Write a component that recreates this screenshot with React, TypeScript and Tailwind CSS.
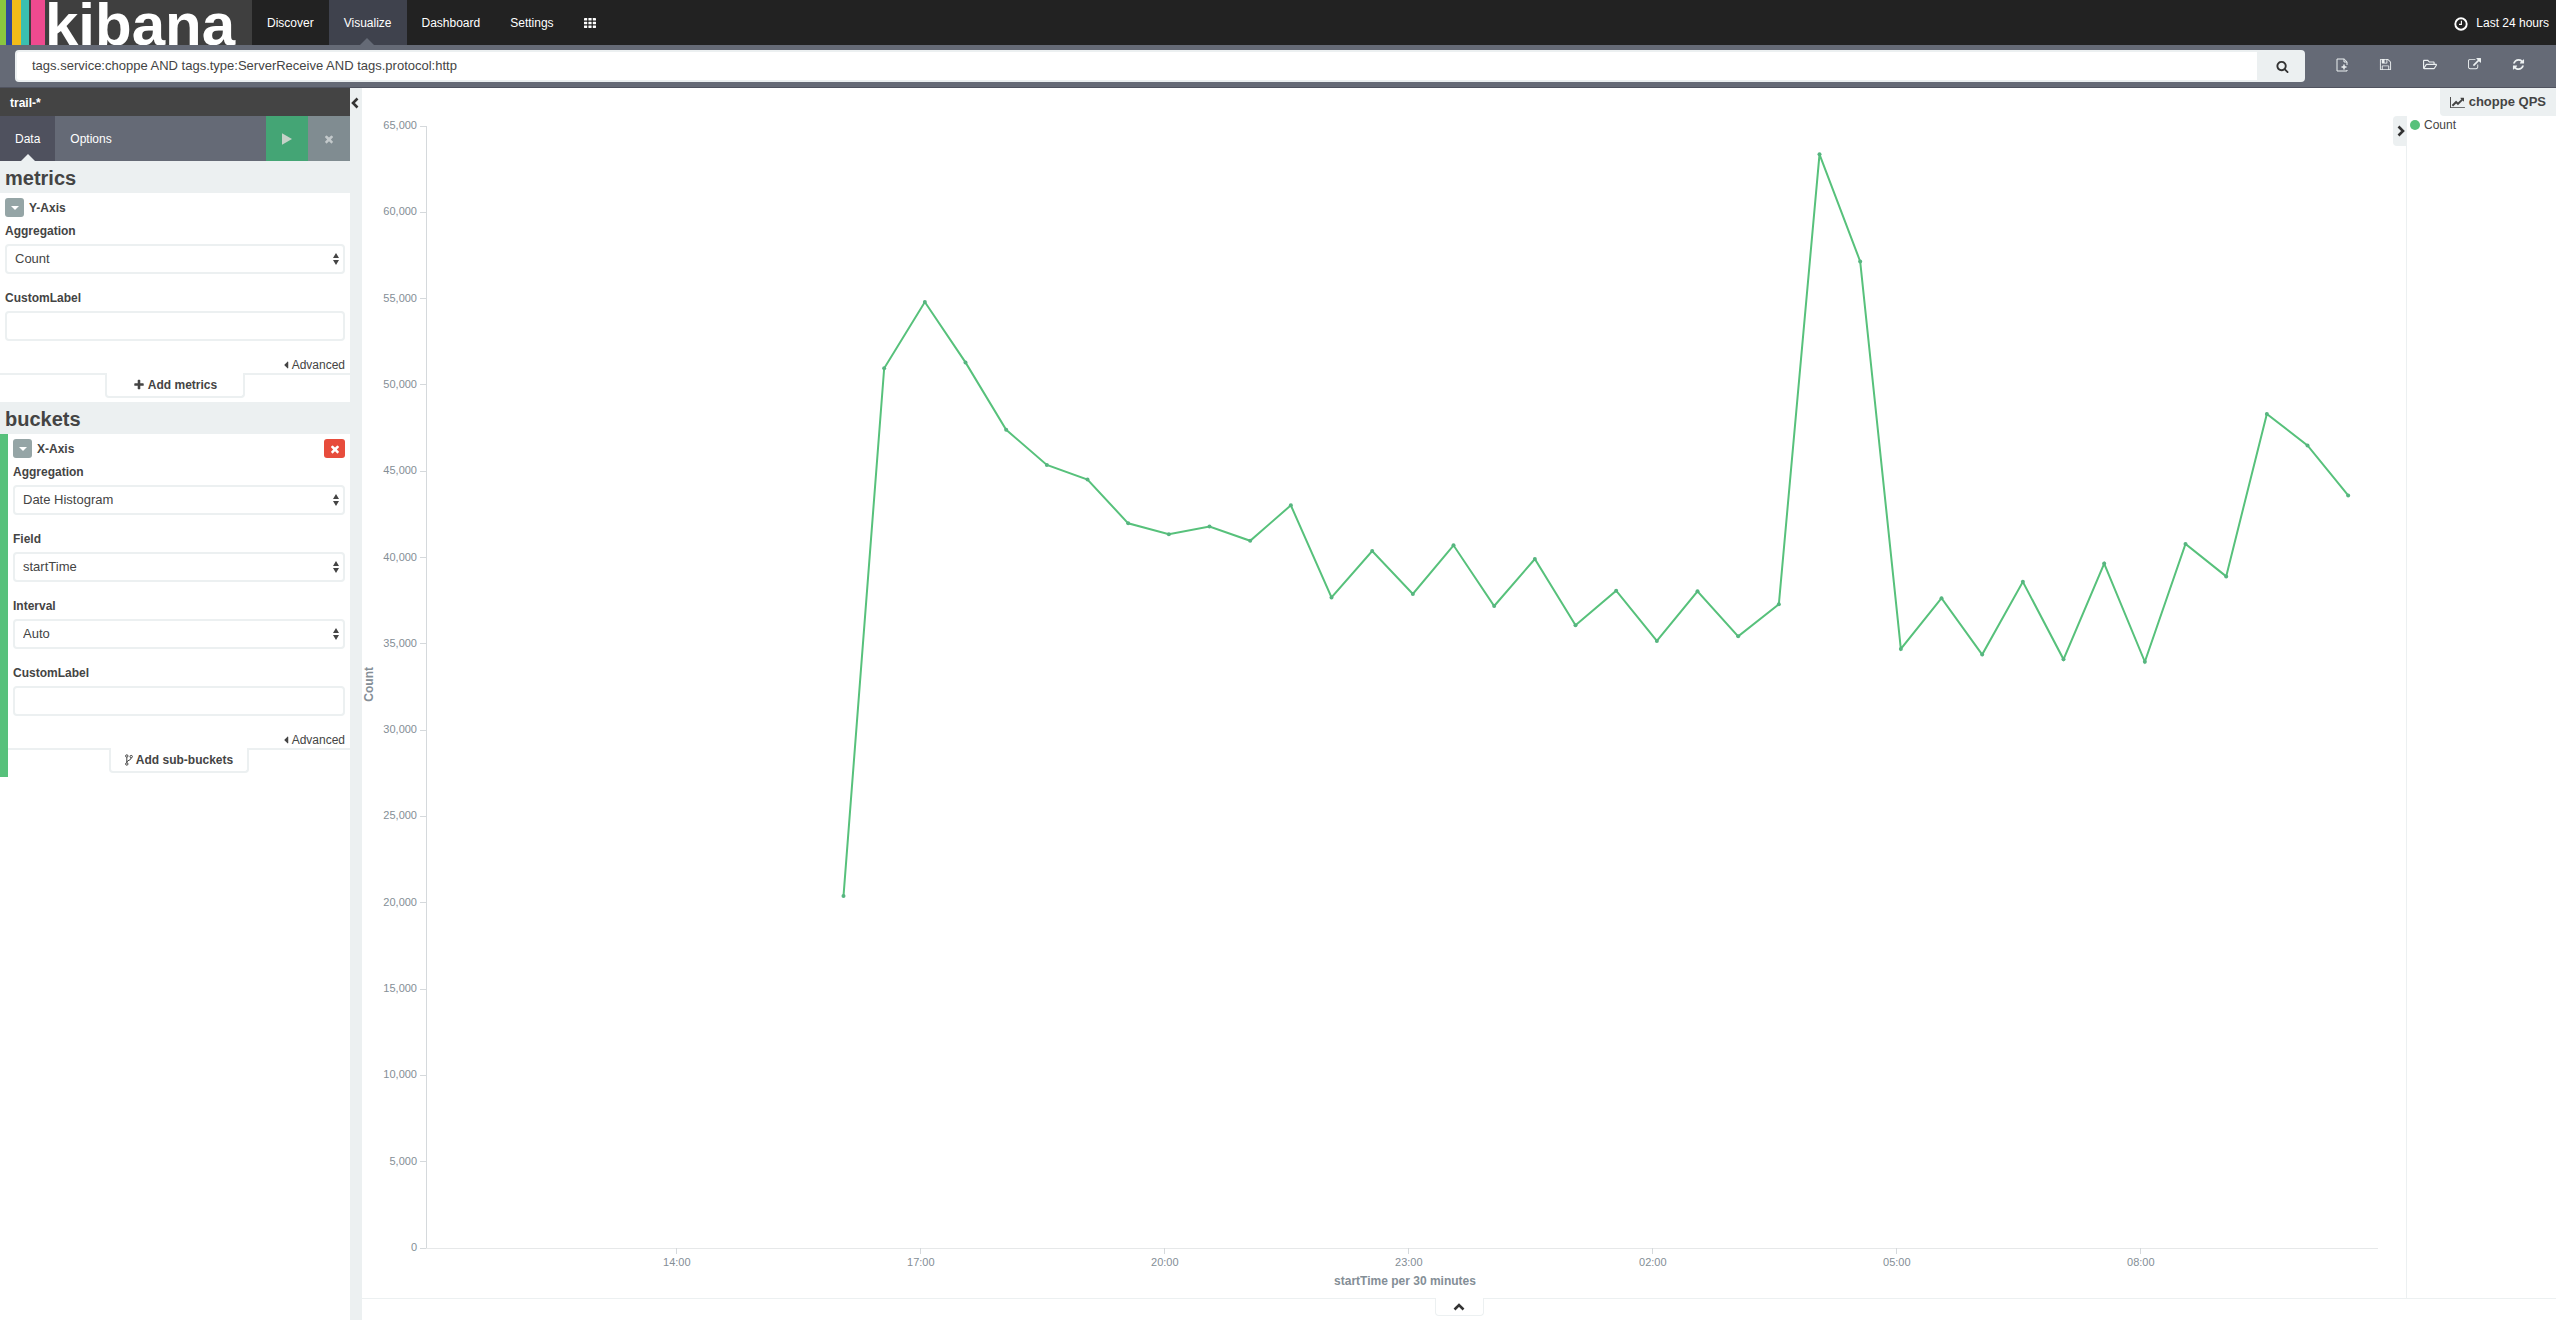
import { useState } from "react";
import type { ReactNode } from "react";
import { FaCaretLeft, FaRegFolderOpen } from "react-icons/fa";

const paths = {
  search: "M1216 832q0-185-131.5-316.5t-316.5-131.5-316.5 131.5-131.5 316.5 131.5 316.5 316.5 131.5 316.5-131.5 131.5-316.5zm512 832q0 52-38 90t-90 38q-54 0-90-38l-343-342q-179 124-399 124-143 0-273.5-55.5t-225-150-150-225-55.5-273.5 55.5-273.5 150-225 225-150 273.5-55.5 273.5 55.5 225 150 150 225 55.5 273.5q0 220-124 399l343 343q37 37 37 90z",
  save: "M512 1536h768v-384h-768v384zm896 0h128v-896q0-14-10-38.5t-20-34.5l-281-281q-10-10-34-20t-39-10v416q0 40-28 68t-68 28h-576q-40 0-68-28t-28-68v-416h-128v1280h128v-416q0-40 28-68t68-28h832q40 0 68 28t28 68v416zm-384-928v-320q0-13-9.5-22.5t-22.5-9.5h-192q-13 0-22.5 9.5t-9.5 22.5v320q0 13 9.5 22.5t22.5 9.5h192q13 0 22.5-9.5t9.5-22.5zm640 32v928q0 40-28 68t-68 28h-1344q-40 0-68-28t-28-68v-1344q0-40 28-68t68-28h928q40 0 88 20t76 48l280 280q28 28 48 76t20 88z",
  share: "M1408 928v320q0 119-84.5 203.5t-203.5 84.5h-832q-119 0-203.5-84.5t-84.5-203.5v-832q0-119 84.5-203.5t203.5-84.5h704q14 0 23 9t9 23v64q0 14-9 23t-23 9h-704q-66 0-113 47t-47 113v832q0 66 47 113t113 47h832q66 0 113-47t47-113v-320q0-14 9-23t23-9h64q14 0 23 9t9 23zm384-864v512q0 26-19 45t-45 19-45-19l-176-176-652 652q-10 10-23 10t-23-10l-114-114q-10-10-10-23t10-23l652-652-176-176q-19-19-19-45t19-45 45-19h512q26 0 45 19t19 45z",
  refresh: "M1639 1056q0 5-1 7-64 268-268 434.5t-478 166.5q-146 0-282.5-55t-243.5-157l-129 129q-19 19-45 19t-45-19-19-45v-448q0-26 19-45t45-19h448q26 0 45 19t19 45-19 45l-137 137q71 66 161 102t187 36q134 0 250-65t186-179q11-17 53-117 8-23 30-23h192q13 0 22.5 9.5t9.5 22.5zm25-800v448q0 26-19 45t-45 19h-448q-26 0-45-19t-19-45 19-45l138-138q-148-137-349-137-134 0-250 65t-186 179q-11 17-53 117-8 23-30 23h-199q-13 0-22.5-9.5t-9.5-22.5v-7q65-268 270-434.5t480-166.5q146 0 284 55.5t245 156.5l130-129q19-19 45-19t45 19 19 45z",
  close: "M1490 1322q0 40-28 68l-136 136q-28 28-68 28t-68-28l-294-294-294 294q-28 28-68 28t-68-28l-136-136q-28-28-28-68t28-68l294-294-294-294q-28-28-28-68t28-68l136-136q28-28 68-28t68 28l294 294 294-294q28-28 68-28t68 28l136 136q28 28 28 68t-28 68l-294 294 294 294q28 28 28 68z",
  plus: "M1600 736v192q0 40-28 68t-68 28h-416v416q0 40-28 68t-68 28h-192q-40 0-68-28t-28-68v-416h-416q-40 0-68-28t-28-68v-192q0-40 28-68t68-28h416v-416q0-40 28-68t68-28h192q40 0 68 28t28 68v416h416q40 0 68 28t28 68z",
  chart: "M2048 1536v128h-2048v-1536h128v1408h1920zm-128-1248v435q0 21-19.5 29.5t-35.5-7.5l-121-121-633 633q-10 10-23 10t-23-10l-233-233-416 416-192-192 585-585q10-10 23-10t23 10l233 233 464-464-121-121q-16-16-7.5-35.5t29.5-19.5h435q14 0 23 9t9 23z",
};

function Icon({ name, className, box = "0 0 1792 1792" }: { name: keyof typeof paths; className: string; box?: string }) {
  return (
    <svg viewBox={box} className={className} fill="currentColor" aria-hidden="true">
      <path d={paths[name]} />
    </svg>
  );
}

const chevrons = {
  left: "M7.5 1.5L3 6l4.5 4.5",
  right: "M4.5 1.5L9 6l-4.5 4.5",
  up: "M1.5 8.5L6 4l4.5 4.5",
};

function Chevron({ dir }: { dir: keyof typeof chevrons }) {
  return (
    <svg viewBox="0 0 12 12" className="h-3 w-3 text-[#333]" fill="none" stroke="currentColor" strokeWidth="2.6" aria-hidden="true">
      <path d={chevrons[dir]} />
    </svg>
  );
}

// one count per 30 minutes
const counts = [
  20398, 50969, 54804, 51305, 47400, 45367, 44515, 41983, 41346, 41798, 40970, 43026, 37685,
  40379, 37888, 40709, 37192, 39915, 36074, 38079, 35165, 38044, 35437, 37291, 63360, 57156,
  34707, 37644, 34377, 38594, 34105, 39649, 33960, 40790, 38907, 48321, 46496, 43600,
];
const MAX = 65000;
const DAY = 1440;
const FIRST_POINT = 308;
const FIRST_TICK = 185;
const points = counts.map((c, i) => ({
  x: ((FIRST_POINT + i * 30) / DAY) * 100,
  y: 100 - (c / MAX) * 100,
}));
const yTicks = Array.from({ length: 14 }, (_, i) => i * 5000);
const xTicks = ["14:00", "17:00", "20:00", "23:00", "02:00", "05:00", "08:00"];

function LineChart() {
  return (
    <svg className="block w-full flex-1 overflow-visible text-[11px]" role="img" aria-label="Count per 30 minutes">
      <g stroke="#d5d9dc" strokeWidth="1" shapeRendering="crispEdges">
        <line x1="0" y1="0" x2="0" y2="100%" />
        <line x1="0" y1="100%" x2="100%" y2="100%" stroke="#e6e8e9" />
        {yTicks.map((t) => (
          <line key={t} x1="-6" x2="0" y1={`${100 - (t / MAX) * 100}%`} y2={`${100 - (t / MAX) * 100}%`} />
        ))}
      </g>
      {yTicks.map((t) => (
        <text key={t} x="-9" y={`${100 - (t / MAX) * 100}%`} dy="3" textAnchor="end" fill="#848e96">
          {t.toLocaleString("en-US")}
        </text>
      ))}
      {xTicks.map((t, i) => {
        const x = `${((FIRST_TICK + i * 180) / DAY) * 100}%`;
        return (
          <svg key={t} x={x} y="100%" overflow="visible">
            <line x1="0" x2="0" y1="0" y2="6" stroke="#d5d9dc" shapeRendering="crispEdges" />
            <text x="0" y="18" textAnchor="middle" fill="#848e96">{t}</text>
          </svg>
        );
      })}
      <svg width="100%" height="100%" viewBox="0 0 100 100" preserveAspectRatio="none" overflow="visible">
        <polyline
          points={points.map((p) => `${p.x},${p.y}`).join(" ")}
          fill="none"
          stroke="#57c17b"
          strokeWidth="2"
          vectorEffect="non-scaling-stroke"
        />
      </svg>
      {points.map((p) => (
        <circle key={p.x} cx={`${p.x}%`} cy={`${p.y}%`} r="2" fill="#57b580" />
      ))}
    </svg>
  );
}

function SelectField({ id, label, value }: { id: string; label: string; value: string }) {
  return (
    <div className="mb-[15px]">
      <label htmlFor={id} className="mb-1 block h-[18px] font-bold leading-[18px]">{label}</label>
      <div className="relative">
        <select id={id} className="block h-[30px] w-full appearance-none rounded border-2 border-[#ecf0f1] bg-white px-2 text-[13px]">
          <option>{value}</option>
        </select>
        <svg viewBox="0 0 6 12" className="pointer-events-none absolute right-1.5 top-[9px] h-3 w-1.5" fill="#444" aria-hidden="true">
          <path d="M0 5l3-5 3 5zM0 7h6l-3 5z" />
        </svg>
      </div>
    </div>
  );
}

function TextField({ id, label }: { id: string; label: string }) {
  return (
    <div className="mb-[15px]">
      <label htmlFor={id} className="mb-1 block h-[18px] font-bold leading-[18px]">{label}</label>
      <input id={id} type="text" className="block h-[30px] w-full rounded border-2 border-[#ecf0f1] bg-white px-2 text-[13px]" />
    </div>
  );
}

function AggPanel({ title, removable, addLabel, addIcon, children }: {
  title: string;
  removable?: boolean;
  addLabel: string;
  addIcon: ReactNode;
  children: ReactNode;
}) {
  return (
    <div className="flex-1 bg-white">
      <div className="px-[5px] pt-[5px]">
        <div className="mb-[5px] flex h-[19px] items-center gap-[5px]">
          <button aria-label={`Toggle ${title}`} className="flex h-[19px] w-[19px] items-center justify-center rounded-[3px] bg-[#95a5a6] text-white">
            <svg viewBox="0 0 8 4" className="h-1 w-2" fill="currentColor" aria-hidden="true"><path d="M0 0h8L4 4z" /></svg>
          </button>
          <span className="font-bold">{title}</span>
          {removable && (
            <button aria-label="Remove" className="ml-auto flex h-[19px] w-[21px] items-center justify-center rounded-[3px] bg-[#e74c3c] text-white">
              <Icon name="close" className="h-3 w-3" />
            </button>
          )}
        </div>
        {children}
        <div className="flex h-[17px] justify-end">
          <button className="flex items-center gap-[3px] leading-4">
            <FaCaretLeft className="h-3 w-1.5" />Advanced
          </button>
        </div>
      </div>
      <div className="flex h-[29px] items-start">
        <div className="flex-1 border-t-2 border-[#ecf0f1]"></div>
        <button className="flex h-[25px] w-[140px] items-center justify-center gap-[3px] rounded-b border-x-2 border-b-2 border-[#ecf0f1] font-bold">
          {addIcon}{addLabel}
        </button>
        <div className="flex-1 border-t-2 border-[#ecf0f1]"></div>
      </div>
    </div>
  );
}

function Sidebar() {
  const [tab, setTab] = useState("Data");
  return (
    <aside className="w-[350px] shrink-0 bg-white">
      <h2 className="h-7 bg-[#444] pl-2.5 font-bold leading-[30px] text-white">trail-*</h2>
      <div className="flex h-[45px] bg-[#656a76] text-white">
        {["Data", "Options"].map((t) => (
          <button key={t} onClick={() => setTab(t)} className={`relative px-[15px] ${tab === t ? "bg-[#4f515e]" : ""}`}>
            {t}
            {tab === t && (
              <svg viewBox="0 0 14 7" className="absolute bottom-0 left-[21px] h-[7px] w-3.5" fill="#ecf0f1" aria-hidden="true"><path d="M0 7l7-7 7 7z" /></svg>
            )}
          </button>
        ))}
        <button aria-label="Apply changes" className="ml-auto flex w-[42px] items-center justify-center bg-[#44a575] text-[#c5d2c8]">
          <svg viewBox="0 0 10 12" className="h-3 w-2.5" fill="currentColor" aria-hidden="true"><path d="M0 0.3v11.4L10 6z" /></svg>
        </button>
        <button aria-label="Discard changes" className="flex w-[42px] items-center justify-center bg-[#808c91] text-[#c3c9cb]">
          <Icon name="close" className="h-3 w-3" />
        </button>
      </div>
      <h3 className="h-8 bg-[#ecf0f1] pl-[5px] text-xl font-bold leading-[34px]">metrics</h3>
      <AggPanel title="Y-Axis" addLabel="Add metrics" addIcon={<Icon name="plus" className="h-3 w-3" />}>
        <SelectField id="metric-agg" label="Aggregation" value="Count" />
        <TextField id="metric-label" label="CustomLabel" />
      </AggPanel>
      <h3 className="h-8 bg-[#ecf0f1] pl-[5px] text-xl font-bold leading-[34px]">buckets</h3>
      <div className="flex">
        <div className="w-2 bg-[#57c17b]"></div>
        <AggPanel
          title="X-Axis"
          removable
          addLabel="Add sub-buckets"
          addIcon={
            <svg viewBox="0 0 8 12" className="h-3 w-2" fill="none" stroke="currentColor" aria-hidden="true">
              <circle cx="1.8" cy="2" r="1.2" /><circle cx="6.2" cy="2.6" r="1.2" /><circle cx="1.8" cy="10" r="1.2" />
              <path d="M1.8 3.2v5.6M6.2 3.8c0 3-4.4 2-4.4 4.6" />
            </svg>
          }
        >
          <SelectField id="bucket-agg" label="Aggregation" value="Date Histogram" />
          <SelectField id="bucket-field" label="Field" value="startTime" />
          <SelectField id="bucket-interval" label="Interval" value="Auto" />
          <TextField id="bucket-label" label="CustomLabel" />
        </AggPanel>
      </div>
    </aside>
  );
}

function Navbar() {
  return (
    <nav className="flex h-[45px] bg-[#222] text-white">
      <a href="#" className="flex h-[45px] w-[252px] overflow-hidden bg-[#3f3f3f]">
        <span className="w-1.5 bg-[#8ac640]"></span>
        <span className="w-1.5 bg-[#2f479b]"></span>
        <span className="w-[9px] bg-[#f2bc1a]"></span>
        <span className="w-2 bg-[#3bbfb0]"></span>
        <span className="w-[2px]"></span>
        <span className="w-3.5 bg-[#ee4a8f]"></span>
        <span className="text-[60px] font-bold leading-[49px]">kibana</span>
      </a>
      <a href="#discover" className="flex items-center px-[15px]">Discover</a>
      <a href="#visualize" className="relative flex items-center bg-[#3f424d] px-[15px]">
        Visualize
        <svg viewBox="0 0 14 7" className="absolute bottom-0 left-[31px] h-[7px] w-3.5" fill="#656a76" aria-hidden="true"><path d="M0 7l7-7 7 7z" /></svg>
      </a>
      <a href="#dashboard" className="flex items-center px-[15px]">Dashboard</a>
      <a href="#settings" className="flex items-center px-[15px]">Settings</a>
      <button aria-label="Apps" className="px-[15px]">
        <svg viewBox="0 0 12 10" className="h-2.5 w-3" fill="currentColor" aria-hidden="true">
          {[0, 3.7, 7.4].map((y) => [0, 4.4, 8.8].map((x) => <rect key={`${x}-${y}`} x={x} y={y} width="3.2" height="2.6" rx="0.4" />))}
        </svg>
      </button>
      <button className="ml-auto flex items-center gap-2 pr-[7px]">
        <svg viewBox="0 0 14 14" className="mt-[2px] h-3.5 w-3.5" fill="none" stroke="currentColor" aria-hidden="true">
          <circle cx="7" cy="7" r="5.7" strokeWidth="1.9" /><path d="M7.4 3.8v3.6H5" strokeWidth="1.1" />
        </svg>
        Last 24 hours
      </button>
    </nav>
  );
}

function SearchBar() {
  const [query, setQuery] = useState("tags.service:choppe AND tags.type:ServerReceive AND tags.protocol:http");
  return (
    <div className="flex h-[43px] items-center border-b border-[#50535f] bg-[#656a76] pl-[15px] pr-[31px] text-[#ecf0f1]">
      <form className="flex h-8 flex-1" onSubmit={(e) => e.preventDefault()}>
        <input
          type="text"
          aria-label="Search query"
          value={query}
          onChange={(e) => setQuery(e.target.value)}
          className="min-w-0 flex-1 rounded-l border-2 border-[#ecf0f1] bg-white px-[15px] text-[13px] text-[#444]"
        />
        <button aria-label="Search" className="flex w-[46px] items-center justify-center rounded-r bg-[#ecf0f1] text-[#333]">
          <Icon name="search" className="h-[13px] w-[13px]" />
        </button>
      </form>
      <div className="mb-[3px] ml-[31px] flex items-center gap-[31px]">
        <button aria-label="New visualization">
          <svg viewBox="0 0 12 14" className="h-3.5 w-3" fill="none" stroke="currentColor" aria-hidden="true">
            <path d="M11 7V3.8L8.2 1H1v12h10v-1M8 1v3h3" /><path d="M8 6.5v5M5.5 9h5" strokeWidth="1.5" />
          </svg>
        </button>
        <button aria-label="Save visualization"><Icon name="save" className="h-[13px] w-[13px]" /></button>
        <button aria-label="Load saved visualization"><FaRegFolderOpen className="h-[13px] w-3.5" /></button>
        <button aria-label="Share visualization"><Icon name="share" className="h-[13px] w-[13px]" /></button>
        <button aria-label="Refresh"><Icon name="refresh" className="h-[13px] w-[13px]" /></button>
      </div>
    </div>
  );
}

export default function App() {
  return (
    <div className="flex min-h-screen flex-col bg-white font-['Liberation_Sans',Arial,sans-serif] text-xs text-[#444]">
      <Navbar />
      <SearchBar />
      <div className="flex flex-1">
        <Sidebar />
        <div className="flex w-3 shrink-0 items-start justify-center bg-[#ecf0f1] pt-[9px]">
          <button aria-label="Collapse sidebar"><Chevron dir="left" /></button>
        </div>
        <main className="flex min-w-0 flex-1 flex-col">
          <div className="flex h-7 justify-end">
            <h1 className="flex items-center gap-1 rounded-bl bg-[#ecf0f1] px-2.5 text-[13px] font-bold">
              <Icon name="chart" box="0 0 2048 1792" className="h-[13px] w-[15px]" />choppe QPS
            </h1>
          </div>
          <div className="flex flex-1">
            <div className="flex min-w-0 flex-1 pt-2.5">
              <div className="flex w-16 items-center pb-14">
                <span className="rotate-180 font-bold leading-[14px] text-[#848e96] [writing-mode:vertical-rl]">Count</span>
              </div>
              <div className="flex min-w-0 flex-1 flex-col">
                <LineChart />
                <div className="h-[50px] pl-1.5 pt-6 text-center font-bold leading-[18px] text-[#848e96]">startTime per 30 minutes</div>
              </div>
            </div>
            <div className="flex w-7 items-start justify-end">
              <button aria-label="Toggle legend" className="flex h-[30px] w-[13px] items-center justify-center rounded-l bg-[#ecf0f1]">
                <Chevron dir="right" />
              </button>
            </div>
            <div className="w-[150px] border-l border-[#ecf0f1] pl-[3px]">
              <div className="flex h-[18px] items-center gap-1">
                <span className="h-2.5 w-2.5 rounded-full bg-[#57c17b]"></span>Count
              </div>
            </div>
          </div>
          <div className="flex h-[22px] items-start">
            <div className="flex-1 border-t border-[#ecf0f1]"></div>
            <button aria-label="Show spy panel" className="flex h-[18px] w-[49px] items-center justify-center rounded-b border-x border-b border-[#ecf0f1]">
              <Chevron dir="up" />
            </button>
            <div className="flex-1 border-t border-[#ecf0f1]"></div>
          </div>
        </main>
      </div>
    </div>
  );
}
